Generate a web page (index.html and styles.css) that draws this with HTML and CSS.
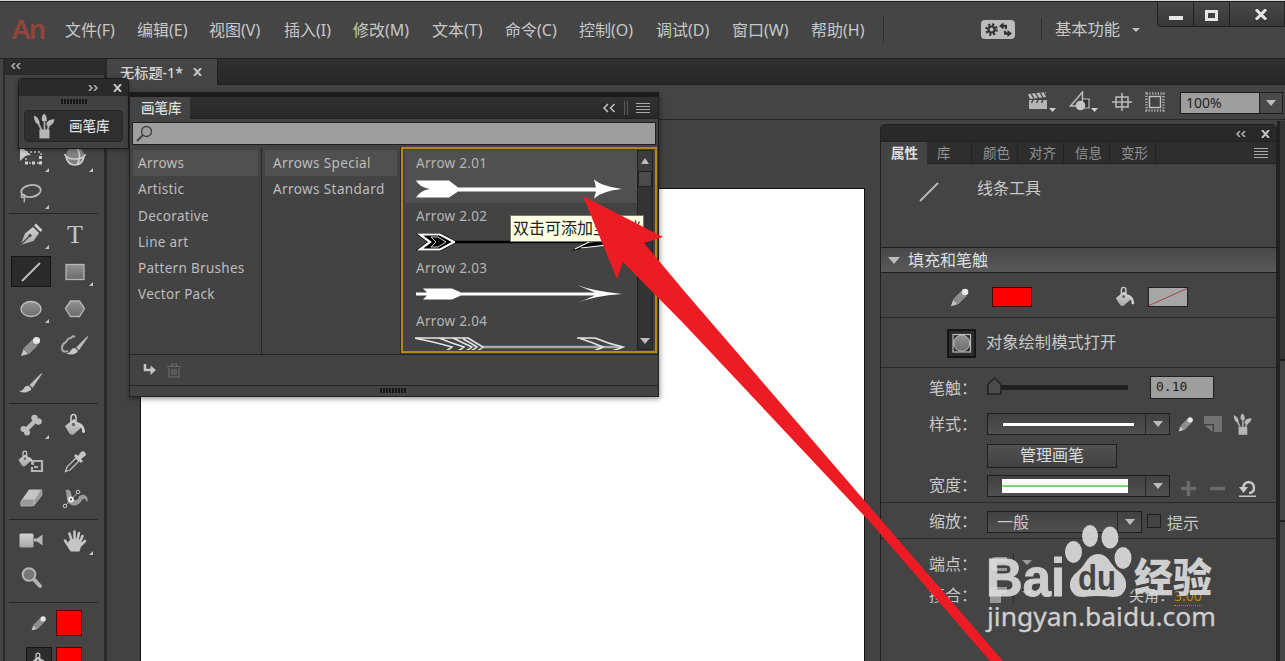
FILE: index.html
```html
<!DOCTYPE html>
<html lang="zh-CN">
<head>
    <meta charset="UTF-8">
    <meta name="viewport" content="width=device-width, initial-scale=1.0">
    <title>无标题-1*</title>
    <link rel="stylesheet" href="styles.css">
</head>
<body>
    <!-- Shared icons -->
    <svg class="defs" width="0" height="0">
        <defs>
            <linearGradient id="metal" x1="0" y1="0" x2="0" y2="1">
                <stop offset="0" stop-color="#d2d2d2"/>
                <stop offset="1" stop-color="#a8a8a8"/>
            </linearGradient>
            <linearGradient id="shade" x1="0" y1="0" x2="0" y2="1">
                <stop offset="0" stop-color="#929292"/>
                <stop offset="1" stop-color="#6c6c6c"/>
            </linearGradient>
        </defs>
        <symbol id="pencil" viewBox="0 0 24 24">
            <path d="M2 22l2.5-7 5 5z" fill="#c4c4c4"/>
            <path d="M5 14.500l8.500-8.500 5 5-8.500 8.500z" fill="#8c8c8c" stroke="#adadad" stroke-width=".7"/>
            <circle cx="17.500" cy="6.500" r="3.600" fill="#e6e6e6"/>
        </symbol>
        <symbol id="bucket" viewBox="0 0 24 24">
            <path d="M2 13l9-7 8 8-8.500 7.500q-2 1-4-1z" fill="url(#metal)"/>
            <path d="M8 11V4.500Q8 1.500 10.500 1.500T13 4.500V11" fill="none" stroke="#c9c9c9" stroke-width="1.600"/>
            <circle cx="10.500" cy="11.500" r="1.700" fill="#666"/>
            <path d="M13 9q7 .5 8.500 7 1.500 4-.8 4-2.200 0-1.700-4" fill="#ccc"/>
        </symbol>
        <symbol id="brushes" viewBox="0 0 24 28">
            <path d="M7 17h11v10H7z" fill="#b5b5b5"/>
            <path d="M9 17L5 9M12.500 17V6M16 17l3-8" stroke="#aaa" stroke-width="2"/>
            <path d="M1 2q7 3 6 10-6-1-6-10zM9.500 6q0-5 3-6 3 3 2.500 8h-5zM14.500 11q1-5 9-5-1 7-8 8z" fill="#b9b9b9"/>
        </symbol>
        <symbol id="brush" viewBox="0 0 24 24">
            <path d="M22.500 2L10.500 14l3 3L23 3z" fill="#bdbdbd"/>
            <path d="M0 20q4 0 5-3 3-4 6-1t-1 4q-4 3-10 0z" fill="#c6c6c6"/>
        </symbol>
    </svg>

    <div class="app">
        <!-- Menu bar -->
        <header class="menubar">
            <div class="logo">An</div>
            <nav class="menu">
                <span>文件(F)</span><span>编辑(E)</span><span>视图(V)</span><span>插入(I)</span><span>修改(M)</span><span>文本(T)</span><span>命令(C)</span><span>控制(O)</span><span>调试(D)</span><span>窗口(W)</span><span>帮助(H)</span>
            </nav>
            <div class="sync">
                <svg width="34" height="19" viewBox="0 0 34 19">
                    <rect width="34" height="19" rx="4" fill="#bcbcbc"/>
                    <circle cx="10.500" cy="9.500" r="4.800" fill="none" stroke="#333" stroke-width="3" stroke-dasharray="2 1.770"/>
                    <circle cx="10.500" cy="9.500" r="3" fill="none" stroke="#333" stroke-width="2.200"/>
                    <path d="M18 6l4.500-3.500v2.300H26V9h-2V7.200h-1.500v2.300zM31 13.500l-4.500 3.500v-2.300H23v-4h2v1.600h1.500V10z" fill="#333"/>
                </svg>
            </div>
            <div class="workspace">基本功能<i class="caret"></i></div>
            <div class="window-buttons">
                <div><i class="min"></i></div>
                <div><i class="max"></i></div>
                <div><svg width="14" height="11" viewBox="0 0 14 11"><path d="M2 .500l10 10M12 .500l-10 10" stroke="#e6e6e6" stroke-width="3"/></svg></div>
            </div>
        </header>

        <div class="main">
            <!-- Tools -->
            <aside class="toolbox">
                <div class="toolbox-head"><svg width="10" height="6" viewBox="0 0 10 6"><path d="M4 0L1 3l3 3M9 0L6 3l3 3" fill="none" stroke="#b5b5b5" stroke-width="1.500"/></svg></div>
                <div class="tools first">
                    <div class="tool flyout"><svg width="24" height="24" viewBox="0 0 24 24"><path d="M1 0l11 9-5 .500L1 15z" fill="#ccc"/><path d="M7 6h15v11H7z" fill="none" stroke="#c4c4c4" stroke-width="1.300" stroke-dasharray="2 2"/><path d="M6 15.500h3v3H6zM13 15.500h3v3h-3zM20 15.500h3v3h-3zM20 10h3v3h-3z" fill="#d0d0d0"/></svg></div>
                    <div class="tool flyout"><svg width="24" height="24" viewBox="0 0 24 24"><circle cx="12" cy="9.500" r="9" fill="#828282"/><path d="M1.500 8q2 5 10.500 5t10.500-5M12 0q8 8 2 19M21 11q-2 8-9 8t-9-8" fill="none" stroke="#cfcfcf" stroke-width="1.600"/></svg></div>
                    <div class="tool flyout"><svg width="24" height="24" viewBox="0 0 24 24"><ellipse cx="12" cy="8" rx="9.800" ry="6" transform="rotate(-8 12 8)" fill="none" stroke="#b8b8b8" stroke-width="1.800"/><path d="M3 11.500q-2 3 1 3t2-2q-1-2-3 0M5 14.500q1 2 0 5" fill="none" stroke="#b8b8b8" stroke-width="1.400"/></svg></div>
                </div>
                <div class="tools">
                    <div class="tool flyout"><svg width="24" height="24" viewBox="0 0 24 24"><path d="M1.500 22L6 10.500l8-6.500 6 6-5.500 8z" fill="url(#metal)"/><path d="M15 2.500L17 .500l6.500 6.500-2 2z" fill="#ccc"/><path d="M2 21.500l8.500-8.500" stroke="#444" stroke-width="1.200"/><circle cx="11" cy="12.500" r="1.600" fill="#444"/></svg></div>
                    <div class="tool letter">T</div>
                    <div class="tool selected"><svg width="24" height="24" viewBox="0 0 24 24"><path d="M3 21L21 3" stroke="#bcbcbc" stroke-width="2"/></svg></div>
                    <div class="tool flyout"><svg width="24" height="24" viewBox="0 0 24 24"><rect x="3" y="4.500" width="18" height="15" fill="url(#shade)" stroke="#b5b5b5" stroke-width="1.300"/></svg></div>
                    <div class="tool flyout"><svg width="24" height="24" viewBox="0 0 24 24"><ellipse cx="12" cy="12" rx="10" ry="7.500" fill="url(#shade)" stroke="#bebebe" stroke-width="1.400"/></svg></div>
                    <div class="tool"><svg width="24" height="24" viewBox="0 0 24 24"><path d="M7.500 4h9l5 7.500-5 8h-9l-5-8z" fill="url(#shade)" stroke="#b5b5b5" stroke-width="1.400"/></svg></div>
                    <div class="tool"><svg width="24" height="24"><use href="#pencil"/></svg></div>
                    <div class="tool"><svg width="28" height="24" viewBox="0 0 28 24"><use href="#brush" x="5" y="0" width="23" height="23"/><path d="M14 3q-2-2-4 1-3 0-5 4-4 2-4 6 0 5 6 3" fill="none" stroke="#a8a8a8" stroke-width="2"/></svg></div>
                    <div class="tool"><svg width="24" height="24"><use href="#brush"/></svg></div>
                </div>
                <div class="tools">
                    <div class="tool flyout"><svg width="24" height="24" viewBox="0 0 24 24"><path d="M5.500 18.500l12-12" stroke="#bdbdbd" stroke-width="4.500"/><g fill="#bdbdbd"><circle cx="4.500" cy="16" r="3"/><circle cx="8" cy="19.500" r="3"/><circle cx="15.500" cy="5" r="3.200"/><circle cx="19.500" cy="8.500" r="3.200"/></g></svg></div>
                    <div class="tool"><svg width="24" height="24"><use href="#bucket"/></svg></div>
                    <div class="tool"><svg width="28" height="24" viewBox="0 0 28 24"><use href="#bucket" x="0" y="0" width="18" height="18"/><path d="M16 15v-4h9v10H15v-4M17 17h4" fill="none" stroke="#b2b2b2" stroke-width="2.200"/></svg></div>
                    <div class="tool"><svg width="24" height="24" viewBox="0 0 24 24"><path d="M2.500 21.500L4 17l9-9 3 3-9 9z" fill="none" stroke="#c2c2c2" stroke-width="1.300"/><path d="M11 6l2-2 2 2 3-4q2-1.500 4 .5t0 3.500l-4 3 2 2-2 2z" fill="#c6c6c6"/></svg></div>
                    <div class="tool"><svg width="24" height="24" viewBox="0 0 24 24"><path d="M10 2.500h12l-6 10H3z" fill="#c4c4c4"/><path d="M3 12.500h12.500l-2 6.500H2q-1-3 1-6.500zM16 12.500L22.500 2.500l.5 5.500-8.500 11z" fill="#989898" stroke="#bbb" stroke-width=".8"/></svg></div>
                    <div class="tool"><svg width="28" height="24" viewBox="0 0 28 24"><path d="M5 3.500q4-2 5 4 0 5 3 6 5 0 5-4 3-2 6-1 3 2 2 6-1-4-4-3-2 1-3 4-4 4-9 2-4-2-4-8 0-4-1-6z" fill="#999" stroke="#b4b4b4" stroke-width=".6"/><path d="M4 19L17 5" stroke="#b9b9b9"/><circle cx="4" cy="19" r="1.800" fill="#444" stroke="#c9c9c9"/><circle cx="17" cy="5" r="1.800" fill="#444" stroke="#c9c9c9"/><circle cx="10" cy="12.500" r="2" fill="#444" stroke="#eee" stroke-width="1.800"/></svg></div>
                </div>
                <div class="tools views">
                    <div class="tool"><svg width="26" height="24" viewBox="0 0 26 24"><rect x="1.500" y="4.500" width="14" height="14" rx="1.500" fill="url(#metal)"/><path d="M16 9.500h3l5.500-4v11l-5.500-4h-3z" fill="#b6b6b6"/></svg></div>
                    <div class="tool flyout"><svg width="24" height="24" viewBox="0 0 24 24"><path d="M7.500 20L5 16 2 11.500M9 13L6.500 4.500M11.500 12V2.500M14 12l2-8M16.500 14l3-7M17 17l5-5" fill="none" stroke="#c6c6c6" stroke-width="2.600" stroke-linecap="round"/><path d="M5 13l3-3h8l3 4-2.500 8.500h-9z" fill="#c6c6c6"/></svg></div>
                    <div class="tool"><svg width="24" height="24" viewBox="0 0 24 24"><circle cx="10" cy="8.500" r="6.300" fill="#777" stroke="#b5b5b5" stroke-width="2"/><path d="M15 13.500l6 6.500" stroke="#b3b3b3" stroke-width="4" stroke-linecap="round"/></svg></div>
                </div>
                <div class="swatches">
                    <svg width="18" height="18"><use href="#pencil"/></svg><i class="swatch"></i>
                    <div class="fill-icon"><svg width="18" height="20"><use href="#bucket"/></svg></div><i class="swatch"></i>
                </div>
            </aside>

            <!-- Document -->
            <section class="document">
                <div class="doc-tabs"><div class="doc-tab">无标题-1*<svg width="9" height="8" viewBox="0 0 9 8"><path d="M1 0l7 8M8 0L1 8" stroke="#c4c4c4" stroke-width="2"/></svg></div></div>
                <div class="editbar">
                    <svg width="30" height="22" viewBox="0 0 30 22"><path d="M2 9h18v9H2z" fill="#b5b5b5"/><path d="M1 3l18-2v5L3 8z" fill="#bbb"/><path d="M4 2.500l3 5M8.500 2l3 5M13 1.500l3 5M17 1l3 5" stroke="#444" stroke-width="1.400"/><path d="M6 9l-1.500 3M11 9l-1.500 3M16 9l-1.500 3" stroke="#444" stroke-width="1.400"/><path d="M22 17h7l-3.500 4z" fill="#d0d0d0"/></svg>
                    <svg width="30" height="22" viewBox="0 0 30 22"><path d="M1.500 15L13.500 1v14z" fill="none" stroke="#bbb" stroke-width="1.500"/><path d="M14 8h6v9h-6" fill="#333" stroke="#bbb" stroke-width="1.200"/><circle cx="11.500" cy="14.500" r="4.800" fill="#c5c5c5"/><path d="M22 17h7l-3.500 4z" fill="#d0d0d0"/></svg>
                    <svg width="20" height="22" viewBox="0 0 20 22"><path d="M4 6h12v10H4zM10 2v18M0 11h20" fill="none" stroke="#bbb" stroke-width="1.500"/></svg>
                    <svg width="20" height="22" viewBox="0 0 20 22"><rect x="1.500" y="2.500" width="17" height="17" fill="none" stroke="#aaa" stroke-width="2.400" stroke-dasharray="1.300 1.500"/><rect x="4.500" y="5.500" width="11" height="11" fill="#444" stroke="#c0c0c0" stroke-width="1.400"/></svg>
                    <div class="zoom"><span>100%</span><b><i class="down"></i></b></div>
                </div>
                <div class="pasteboard"><div class="stage"></div></div>
            </section>
        </div>

        <div class="right-dock"><i></i><b></b></div>

        <!-- Collapsed brush library dock -->
        <div class="dock">
            <div class="dock-head">
                <svg width="10" height="6" viewBox="0 0 10 6"><path d="M1 0l3 3-3 3M6 0l3 3-3 3" fill="none" stroke="#b5b5b5" stroke-width="1.500"/></svg>
                <svg width="9" height="8" viewBox="0 0 9 8"><path d="M1 0l7 8M8 0L1 8" stroke="#c4c4c4" stroke-width="2"/></svg>
            </div>
            <i class="grip"></i>
            <div class="dock-button"><svg width="22" height="27"><use href="#brushes"/></svg>画笔库</div>
        </div>

        <!-- Brush library -->
        <div class="library">
            <div class="library-tabs">
                <div class="library-tab">画笔库</div>
                <div class="library-tools">
                    <svg width="14" height="10" viewBox="0 0 14 10"><path d="M6 1L2 5l4 4M12.500 1l-4 4 4 4" fill="none" stroke="#c4c4c4" stroke-width="1.500"/></svg>
                    <i class="bars"></i>
                    <i class="lines"></i>
                </div>
            </div>
            <div class="search"><svg width="18" height="18" viewBox="0 0 18 18"><circle cx="10.500" cy="6.500" r="5" fill="none" stroke="#444" stroke-width="1.400"/><path d="M7 10l-6 6" stroke="#444" stroke-width="2"/></svg></div>
            <div class="columns">
                <ul class="groups">
                    <li class="on">Arrows</li>
                    <li>Artistic</li>
                    <li>Decorative</li>
                    <li>Line art</li>
                    <li>Pattern Brushes</li>
                    <li>Vector Pack</li>
                </ul>
                <ul class="subgroups">
                    <li class="on">Arrows Special</li>
                    <li>Arrows Standard</li>
                </ul>
                <div class="strokes">
                    <div class="stroke-list">
                        <div class="stroke on">Arrow 2.01
                            <svg width="212" height="22" viewBox="0 0 212 22"><path d="M1 2.500h33l9 7h138L179 1.500q8 7 28 9.500-20 2-28 9.500l2-7H43l-9 6H1q4-7 14-8.500Q4 9 1 2.500z" fill="#fff"/></svg>
                        </div>
                        <div class="stroke">Arrow 2.02
                            <svg width="212" height="22" viewBox="0 0 212 22"><path d="M0 2h26l16 9-16 9H0l12-9z" fill="#000"/><path d="M5 3.500h20L39 11l-14 7.500H5L15 11z" fill="none" stroke="#fff" stroke-width="2.200"/><path d="M16 6h7l8 5-8 5h-7l5-5z" fill="#000" stroke="#fff" stroke-width=".8"/><path d="M40 11h160" stroke="#000" stroke-width="2.600"/><path d="M156 20l14-8 26-4-10 6z" fill="#000"/><path d="M160 18l14-7 22-2M166 17l26-3" fill="none" stroke="#fff" stroke-width="1.200"/></svg>
                        </div>
                        <div class="stroke">Arrow 2.03
                            <svg width="212" height="22" viewBox="0 0 212 22"><path d="M1 9.500h11L8 5.500h29l9 4h134L162 2q16 6 45 9-29 2-45 9l18-7.500H46l-9 4H8l4-4H1z" fill="#fff"/></svg>
                        </div>
                        <div class="stroke">Arrow 2.04
                            <svg width="212" height="22" viewBox="0 0 212 22"><path d="M68 11h138" stroke="#aaa" stroke-width="2.400"/><path d="M-1 2h54q8 5 15 9-6 5-16 8H22q10-4 15-8Q20 6-1 2zM24 2q12 5 25 9-5 4-15 8M38 2q10 5 19 9-5 4-15 8M48 3q8 4 14 8-5 4-14 8M162 2h18q14 6 28 9-12 5-28 8h-14q14-4 22-8-12-5-24-9z" fill="none" stroke="#e4e4e4" stroke-width="1.600"/></svg>
                        </div>
                    </div>
                    <div class="scrollbar"><b><i class="up"></i></b><u></u><b class="last"><i class="down"></i></b></div>
                </div>
            </div>
            <div class="library-foot">
                <svg width="14" height="12" viewBox="0 0 14 12"><path d="M2 0v6h6" fill="none" stroke="#c4c4c4" stroke-width="2.600"/><path d="M7.500 1.500l5.500 4.500-5.500 5z" fill="#c4c4c4"/></svg>
                <svg width="14" height="15" viewBox="0 0 14 15"><path d="M0 3.500h14M4.500 3V1h5v2M2 5v9h10V5M5 6v6M7 6v6M9 6v6" fill="none" stroke="#6a6a6a" stroke-width="1.200"/></svg>
            </div>
            <div class="library-grip"><i class="grip"></i></div>
        </div>

        <!-- Properties panel -->
        <div class="properties">
            <div class="prop-head">
                <svg width="10" height="6" viewBox="0 0 10 6"><path d="M4 0L1 3l3 3M9 0L6 3l3 3" fill="none" stroke="#b5b5b5" stroke-width="1.500"/></svg>
                <svg width="9" height="8" viewBox="0 0 9 8"><path d="M1 0l7 8M8 0L1 8" stroke="#c4c4c4" stroke-width="2"/></svg>
            </div>
            <div class="prop-tabs"><b>属性</b><span>库</span><span>颜色</span><span>对齐</span><span>信息</span><span>变形</span><i class="lines"></i></div>
            <div class="prop-tool"><svg width="20" height="20" viewBox="0 0 20 20"><path d="M1 19L19 1" stroke="#bbb" stroke-width="1.800"/></svg>线条工具</div>
            <div class="prop-section"><i class="down"></i>填充和笔触</div>
            <div class="colors">
                <svg width="22" height="22"><use href="#pencil"/></svg><i class="color red"></i>
                <svg width="22" height="22"><use href="#bucket"/></svg><svg class="none" width="40" height="20"><rect x=".500" y=".500" width="39" height="19" fill="#a6a6a6" stroke="#222"/><path d="M1 18.500L39 1.500" stroke="#a04444"/></svg>
            </div>
            <div class="object-mode"><svg width="29" height="29" viewBox="0 0 29 29"><rect x="1" y="1" width="27" height="27" fill="#2c2c2c" stroke="#161616" stroke-width="2"/><rect x="6" y="5.500" width="17.500" height="17.500" fill="#333" stroke="#bbb" stroke-width="1.200"/><circle cx="14.700" cy="14.200" r="8" fill="url(#shade)" stroke="#bbb"/></svg><span>对象绘制模式打开</span></div>
            <div class="row size"><label>笔触：</label><div class="slider"><svg width="15" height="18" viewBox="0 0 15 18"><path d="M1 17V7.500L7.500 1 14 7.500V17z" fill="#4c4c4c" stroke="#222" stroke-width="1.400"/></svg></div><div class="number">0.10</div></div>
            <div class="row style"><label>样式：</label><div class="select"><i class="white-line"></i><b><i class="down"></i></b></div><svg width="18" height="18"><use href="#pencil"/></svg><svg width="18" height="18" viewBox="0 0 18 18"><path d="M0 1h18v16h-8V9H0z" fill="#727272"/><path d="M1 10.500h7.500V17z" fill="#777"/></svg><svg class="library-icon" width="19" height="23"><use href="#brushes"/></svg></div>
            <div class="row manage"><div class="button">管理画笔</div></div>
            <div class="row width"><label>宽度：</label><div class="select"><i class="profile"></i><b><i class="down"></i></b></div><svg width="15" height="15" viewBox="0 0 15 15"><path d="M7.500 0v15M0 7.500h15" stroke="#6a6a6a" stroke-width="3.500"/></svg><svg width="15" height="15" viewBox="0 0 15 15"><path d="M0 7.500h15" stroke="#6a6a6a" stroke-width="3.500"/></svg><svg width="17" height="18" viewBox="0 0 17 18"><path d="M4 8q1-6 6-6 5 1 5 6t-5 5" fill="none" stroke="#c8c8c8" stroke-width="2.400"/><path d="M0 7h9l-4.500 6zM0 15.500h17v1.500H0z" fill="#c8c8c8"/></svg></div>
            <div class="row scale"><label>缩放：</label><div class="select"><span>一般</span><b><i class="down"></i></b></div><i class="checkbox"></i>提示</div>
            <div class="row cap"><label>端点：</label><svg width="50" height="20" viewBox="0 0 50 20"><path d="M20 3H8q-5 0-5 7t5 7h12v-3H9V8h11zM35 6h10l-5 5z" fill="#999"/><path d="M26.500 0v18" stroke="#292929"/></svg></div>
            <div class="row join"><label>接合：</label><svg width="50" height="20" viewBox="0 0 50 20"><path d="M3 2h17v6h-6v10H3zM35 6h10l-5 5z" fill="#999"/><path d="M26.500 0v18" stroke="#292929"/></svg><span class="miter">尖角：<em>3.00</em></span></div>
        </div>

        <div class="tooltip">双击可添加至文档</div>
        <svg class="pointer" width="1285" height="661" viewBox="0 0 1285 661"><path d="M583 196l80 41-19 6 41 49 185 215 133 154h-13L870 522 685 325l-62-63-6 17z" fill="#ed1c24"/></svg>

        <!-- Watermark -->
        <svg class="watermark" width="240" height="120" viewBox="980 520 240 120">
            <g fill="#dedede">
                <text class="bai" x="986" y="596" textLength="79" lengthAdjust="spacingAndGlyphs">Bai</text>
                <ellipse cx="1073.500" cy="552" rx="8.500" ry="11"/><ellipse cx="1090" cy="536" rx="8" ry="11"/><ellipse cx="1110" cy="537.500" rx="8.500" ry="11"/><ellipse cx="1123" cy="558" rx="8.500" ry="11"/>
                <path d="M1098 554q8 0 13 9 4 6 10 10 6 6 5 14-2 10-13 10-15-2-30 0-11 0-13-10-1-9 7-15 5-4 8-9 5-9 13-9z"/>
                <text class="jingyan" x="1134" y="592" textLength="78" lengthAdjust="spacingAndGlyphs">经验</text>
                <text class="url" x="987" y="626" textLength="229" lengthAdjust="spacingAndGlyphs">jingyan.baidu.com</text>
            </g>
            <text class="du" x="1078" y="590" textLength="38" lengthAdjust="spacingAndGlyphs">du</text>
        </svg>
    </div>
</body>
</html>
```
FILE: styles.css
```css
* {
    box-sizing: border-box;
}
body {
    margin: 0;
    background: #444;
    color: #c8c8c8;
    font-family: "Noto Sans", "Noto Sans CJK SC", sans-serif;
    font-size: 16px;
}
svg {
    display: block;
    flex-shrink: 0;
}
i, em {
    font-style: normal;
}
.defs {
    position: absolute;
}
.app {
    position: relative;
    width: 1285px;
    height: 661px;
    overflow: hidden;
    display: flex;
    flex-direction: column;
    border-top: 1px solid #cdd6d0;
}

/* menu bar */
.menubar {
    height: 57px;
    display: flex;
    align-items: center;
    background: #454545;
    border-top: 1px solid #1c1c1c;
    flex-shrink: 0;
}
.logo {
    width: 65px;
    padding: 0 0 4px 12px;
    color: #94453a;
    font: 600 27px/1 "Noto Sans", sans-serif;
    letter-spacing: -1.500px;
}
.menu {
    display: grid;
    grid-template-columns: 72px 72px 75px 69px 79px 73px 74px 77px 76px 79px 72px;
    height: 26px;
    line-height: 26px;
    border-right: 1px solid #2d2d2d;
    white-space: nowrap;
}
.sync {
    margin: -2px 0 0 97px;
    padding: 2px 26px 2px 0;
    border-right: 1px solid #2d2d2d;
}
.workspace {
    margin: -4px 0 0 13px;
    display: flex;
    align-items: center;
    gap: 12px;
    font-size: 16.300px;
}
.caret {
    margin-top: 4px;
    border: 4px solid transparent;
    border-top-color: #c4c4c4;
    border-bottom: 0;
}
.window-buttons {
    display: flex;
    align-self: flex-start;
    margin-left: auto;
    width: 128px;
    height: 25px;
    background: linear-gradient(#484848, #383838);
    border: 1px solid #202020;
    border-top: 0;
    border-radius: 0 0 0 4px;
}
.window-buttons div {
    display: flex;
    align-items: center;
    justify-content: center;
    width: 36px;
    border-right: 1px solid #202020;
}
.window-buttons div:last-child {
    flex: 1;
    border: 0;
    padding-left: 8px;
}
.min {
    width: 14px;
    height: 4px;
    margin-top: 8px;
    background: #e6e6e6;
}
.max {
    width: 13px;
    height: 11px;
    margin-top: 2px;
    border: 3px solid #e6e6e6;
}

.main {
    display: flex;
    flex: 1;
    min-height: 0;
}

/* tools */
.toolbox {
    width: 107px;
    padding-left: 5px;
    background: linear-gradient(90deg, #444 3px, #2a2a2a 3px, #2a2a2a 5px, #444 5px, #444 104px, #2a2a2a 104px);
    border-top: 1px solid #222;
}
.toolbox-head {
    height: 16px;
    margin-right: 3px;
    padding: 4px 6px;
    background: #2c2c2c;
}
.tools {
    display: grid;
    grid-template-columns: 44px 44px;
    grid-auto-rows: 37px;
    margin-right: 9px;
    margin-left: 4px;
    padding: 2px 0;
    border-top: 1px solid #262626;
}
.tools.first {
    padding: 64px 0 0;
    border: 0;
}
.tools.views {
    padding-bottom: 6px;
}
.tool {
    position: relative;
    display: flex;
    align-items: center;
    justify-content: center;
}
.flyout::after {
    content: "";
    position: absolute;
    right: 4px;
    bottom: 4px;
    border: 2px solid #c6c6c6;
    border-top-color: transparent;
    border-left-color: transparent;
}
.selected {
    margin: 3px 2px 3px 2px;
    background: #2b2b2b;
    border: 1px solid #161616;
}
.letter {
    font: 26px/1 "Liberation Serif", serif;
    color: #c6c6c6;
}
.swatches {
    display: grid;
    grid-template-columns: 26px 26px;
    grid-auto-rows: 26px;
    gap: 11px 4px;
    margin: 0 9px 0 4px;
    padding: 7px 0 0 17px;
    border-top: 1px solid #262626;
    align-items: center;
    justify-items: center;
}
.swatch {
    width: 26px;
    height: 26px;
    background: #f00;
    border: 1px solid #5c0000;
}
.fill-icon {
    width: 26px;
    height: 26px;
    padding: 3px;
    background: #2c2c2c;
    border: 1px solid #161616;
}

/* document */
.document {
    flex: 1;
    display: flex;
    flex-direction: column;
}
.doc-tabs {
    height: 27px;
    background: linear-gradient(#303030, #272727);
    border-top: 1px solid #1f1f1f;
    border-bottom: 1px solid #1f1f1f;
}
.doc-tab {
    display: flex;
    align-items: center;
    gap: 10px;
    width: 111px;
    height: 26px;
    padding-left: 13px;
    background: #454545;
    border-right: 1px solid #222;
    font-size: 14.200px;
    font-weight: 500;
    color: #d6d6d6;
    white-space: nowrap;
}
.editbar {
    display: flex;
    align-items: center;
    height: 35px;
    padding-left: 920px;
    border-bottom: 1px solid #272727;
    background: #444;
    gap: 12px;
}
.editbar svg + svg + svg {
    margin-left: 1px;
}
.zoom {
    display: flex;
    width: 103px;
    height: 22px;
    margin: 2px 0 0 3px;
    border: 1px solid #1e1e1e;
    background: #9e9e9e;
    color: #222;
    font: 14px/20px "Noto Sans", sans-serif;
}
.zoom span {
    flex: 1;
    padding-left: 5px;
}
.zoom b {
    display: flex;
    align-items: center;
    justify-content: center;
    width: 23px;
    background: #4a4a4a;
    border-left: 1px solid #222;
}
.down {
    border: 5px solid transparent;
    border-top: 6px solid #bcbcbc;
    border-bottom: 0;
}
.up {
    border: 4px solid transparent;
    border-bottom: 6px solid #bcbcbc;
    border-top: 0;
}
.pasteboard {
    flex: 1;
    padding: 68px 0 0 33px;
    background: #424242;
}
.stage {
    width: 725px;
    height: 100%;
    background: #fff;
    border: 1px solid #111;
    border-bottom: 0;
}
.right-dock {
    position: absolute;
    left: 1277px;
    top: 120px;
    width: 8px;
    height: 541px;
    background: #444;
    border-left: 3px solid #222;
}
.right-dock i, .right-dock b {
    display: block;
    height: 240px;
    background: #343434;
    border-bottom: 2px solid #1e1e1e;
}
.right-dock b {
    height: 161px;
    background: #444;
}

/* collapsed dock */
.dock {
    position: absolute;
    left: 18px;
    top: 77px;
    width: 111px;
    height: 71px;
    background: #414141;
    border: 1px solid #1d1d1d;
    border-radius: 4px 4px 0 0;
    box-shadow: 0 1px 4px rgba(0, 0, 0, .4);
}
.dock-head {
    display: flex;
    align-items: center;
    justify-content: flex-end;
    gap: 15px;
    height: 17px;
    padding-right: 6px;
    background: #2a2a2a;
}
.grip {
    display: block;
    width: 26px;
    height: 5px;
    background: repeating-linear-gradient(90deg, #161616 0 2px, #444 2px 3px);
}
.dock .grip {
    margin: 3px 0 0 42px;
}
.dock-button {
    display: flex;
    align-items: center;
    gap: 14px;
    height: 32px;
    margin: 6px 5px 0;
    padding-left: 8px;
    background: #2f2f2f;
    border: 1px solid #262626;
    border-radius: 4px;
    font-size: 13.500px;
    font-weight: 500;
    line-height: 28px;
    color: #dcdcdc;
}

/* brush library */
.library {
    position: absolute;
    left: 129px;
    top: 91px;
    width: 530px;
    height: 305px;
    display: flex;
    flex-direction: column;
    background: #434343;
    border: 1px solid #202020;
    border-top: 5px solid #1b1b1b;
    box-shadow: 1px 2px 5px rgba(0, 0, 0, .4);
}
.library-tabs {
    display: flex;
    justify-content: space-between;
    height: 22px;
    background: linear-gradient(#313131, #282828);
    border-bottom: 1px solid #222;
}
.library-tab {
    width: 60px;
    height: 22px;
    padding-left: 11px;
    line-height: 22px;
    background: #444;
    font-size: 13.500px;
    font-weight: 500;
    color: #dcdcdc;
}
.library-tools {
    display: flex;
    align-items: center;
    gap: 8px;
    padding-right: 8px;
}
.bars {
    width: 4px;
    height: 14px;
    border: 1px solid #5a5a5a;
    border-width: 0 1px;
}
.lines {
    width: 14px;
    height: 10px;
    background: repeating-linear-gradient(#aaa 0 1px, transparent 1px 3px);
}
.search {
    height: 23px;
    margin: 3px 2px 0;
    padding: 2px 0 0 3px;
    background: #9e9e9e;
    border: 1px solid #202020;
}
.columns {
    display: grid;
    grid-template-columns: 132px 139px 256px;
    height: 208px;
    margin-top: 2px;
    font-size: 13.500px;
    letter-spacing: .3px;
    color: #bdbdbd;
    border-bottom: 1px solid #242424;
}
.columns ul {
    margin: 0;
    padding: 3px 3px;
    list-style: none;
    border-right: 1px solid #2a2a2a;
}
.columns li {
    height: 26.300px;
    line-height: 26px;
    padding-left: 5px;
}
.columns .on {
    background: #505050;
}
.subgroups li {
    padding-left: 8px;
    letter-spacing: .4px;
}
.strokes {
    display: flex;
    height: 206px;
    padding: 1px 2px;
    border: 2px solid #b98518;
    overflow: hidden;
}
.stroke-list {
    flex: 1;
    overflow: hidden;
}
.stroke {
    height: 52.600px;
    padding-left: 11px;
    line-height: 26px;
    color: #b5b5b5;
}
.stroke svg {
    margin-left: -1px;
    margin-top: 2px;
}
.scrollbar {
    display: flex;
    flex-direction: column;
    width: 16px;
    background: #333;
    border: 1px solid #222;
}
.scrollbar b {
    display: flex;
    align-items: center;
    justify-content: center;
    height: 20px;
    background: #3c3c3c;
}
.scrollbar u {
    height: 16px;
    background: #4b4b4b;
    border: 1px solid #222;
}
.scrollbar .last {
    margin-top: auto;
    height: 16px;
    background: none;
}
.library-foot {
    display: flex;
    align-items: center;
    gap: 10px;
    flex: 1;
    padding-left: 13px;
}
.library-grip {
    height: 11px;
    padding: 2px 0 0 250px;
    border-top: 1px solid #252525;
}

/* properties */
.properties {
    position: absolute;
    left: 880px;
    top: 123px;
    width: 397px;
    height: 540px;
    background: #444;
    border: 1px solid #1f1f1f;
    border-radius: 5px 5px 0 0;
}
.prop-head {
    display: flex;
    align-items: center;
    justify-content: flex-end;
    gap: 15px;
    height: 17px;
    padding: 2px 6px 0 0;
    background: #292929;
    border-radius: 4px 4px 0 0;
    border-bottom: 1px solid #222;
}
.prop-tabs {
    display: flex;
    height: 22px;
    line-height: 22px;
    background: #2e2e2e;
    border-bottom: 1px solid #232323;
    font-size: 13.500px;
    color: #929292;
}
.prop-tabs b {
    width: 46px;
    height: 22px;
    padding-left: 10px;
    background: #444;
    color: #e0e0e0;
    font-weight: bold;
}
.prop-tabs span {
    width: 46px;
    padding-left: 11px;
    border-right: 1px solid #232323;
}
.prop-tabs span:nth-child(2) {
    width: 45px;
    padding-left: 10px;
}
.prop-tabs .lines {
    margin: 6px 8px 0 auto;
}
.prop-tool {
    display: flex;
    gap: 38px;
    height: 84px;
    padding: 11px 0 0 38px;
    border-bottom: 1px solid #1f1f1f;
}
.prop-tool svg {
    margin-top: 7px;
}
.prop-section {
    display: flex;
    align-items: center;
    gap: 8px;
    height: 25px;
    padding-left: 7px;
    background: linear-gradient(#484848, #595959);
    border-bottom: 1px solid #1f1f1f;
    color: #dedede;
    line-height: 22px;
}
.prop-section .down {
    border-width: 7px 6px 0;
}
.colors {
    display: flex;
    align-items: center;
    height: 45px;
    padding: 3px 0 0 68px;
    border-bottom: 1px solid #2a2a2a;
}
.color {
    width: 40px;
    height: 20px;
    margin: 0 82px 0 21px;
    background: #f00;
    border: 1px solid #4c0000;
}
.none {
    margin-left: 12px;
}
.object-mode {
    display: flex;
    align-items: center;
    gap: 10px;
    height: 50px;
    padding-left: 66px;
    border-bottom: 1px solid #2a2a2a;
    font-size: 16.300px;
}
.object-mode svg {
    margin-top: 1px;
}
.object-mode span {
    margin-top: -3px;
}
.row {
    display: flex;
    align-items: center;
    padding-left: 48px;
}
.row label {
    width: 58px;
    margin-top: -2px;
    white-space: nowrap;
    flex-shrink: 0;
}
.size {
    height: 39px;
}
.slider {
    width: 141px;
    height: 18px;
    margin-top: -3px;
    background: linear-gradient(transparent 8px, #202020 8px 13px, transparent 13px);
}
.number {
    width: 64px;
    height: 23px;
    margin-left: 22px;
    padding-left: 5px;
    background: #9e9e9e;
    border: 1px solid #1f1f1f;
    color: #222;
    font: 13px/20px "DejaVu Sans Mono", monospace;
}
.select {
    display: flex;
    align-items: center;
    width: 183px;
    height: 22px;
    border: 1px solid #1f1f1f;
    background: linear-gradient(#414141, #505050);
}
.select b {
    display: flex;
    align-items: center;
    justify-content: center;
    width: 24px;
    height: 20px;
    margin-left: auto;
    border-left: 1px solid #292929;
    font-weight: normal;
}
.white-line {
    width: 131px;
    height: 3px;
    margin-left: 15px;
    background: #fff;
}
.style {
    height: 34px;
    gap: 9px;
}
.style label {
    width: 49px;
}
.style svg:nth-of-type(1) {
    margin-left: -2px;
}
.library-icon {
    margin-left: 2px;
}
.manage {
    height: 31px;
    padding-left: 106px;
}
.button {
    width: 130px;
    height: 24px;
    margin-top: -1px;
    line-height: 21px;
    border: 1px solid #1f1f1f;
    background: linear-gradient(#515151, #414141);
    text-align: center;
    color: #dcdcdc;
}
.width {
    height: 31px;
    padding-bottom: 2px;
    gap: 14px;
    border-bottom: 1px solid #2a2a2a;
}
.width label {
    width: 44px;
    margin-top: -4px;
}
.width > .select {
    margin-right: -3px;
}
.width svg {
    margin-top: 5px;
}
.profile {
    width: 126px;
    height: 14px;
    margin-left: 14px;
    background: linear-gradient(#fff 6px, #79d779 6px 8px, #fff 8px);
}
.scale {
    height: 36px;
    padding-top: 2px;
    border-bottom: 1px solid #2a2a2a;
}
.scale label {
    margin-top: -4px;
}
.scale .select {
    width: 155px;
    padding-left: 9px;
    line-height: 20px;
}
.checkbox {
    width: 14px;
    height: 14px;
    margin: -2px 6px 0 5px;
    border: 1px solid #1f1f1f;
}
.cap {
    height: 50px;
}
.join {
    height: 12px;
}
.miter {
    margin-left: 92px;
    font-size: 15px;
    line-height: 16px;
}
.miter em {
    font-size: 14px;
    color: #b98518;
    border-bottom: 1px dotted #b98518;
}

/* overlays */
.tooltip {
    position: absolute;
    left: 510px;
    top: 214px;
    width: 134px;
    height: 27px;
    padding-left: 2px;
    line-height: 24px;
    background: #ffffe1;
    border: 1px solid #777;
    color: #222;
    white-space: nowrap;
}
.pointer {
    position: absolute;
    left: 0;
    top: -1px;
}
.watermark {
    position: absolute;
    left: 980px;
    top: 519px;
    opacity: .9;
}
.bai {
    font: bold 53px "Liberation Sans", sans-serif;
    stroke: #dedede;
}
.jingyan {
    font: 900 40px "Noto Sans CJK SC", sans-serif;
}
.url {
    font: 26px "Noto Sans", sans-serif;
    stroke: #dedede;
    stroke-width: .3px;
}
.du {
    font: bold 35px "Liberation Sans", sans-serif;
    fill: #444;
}
```
